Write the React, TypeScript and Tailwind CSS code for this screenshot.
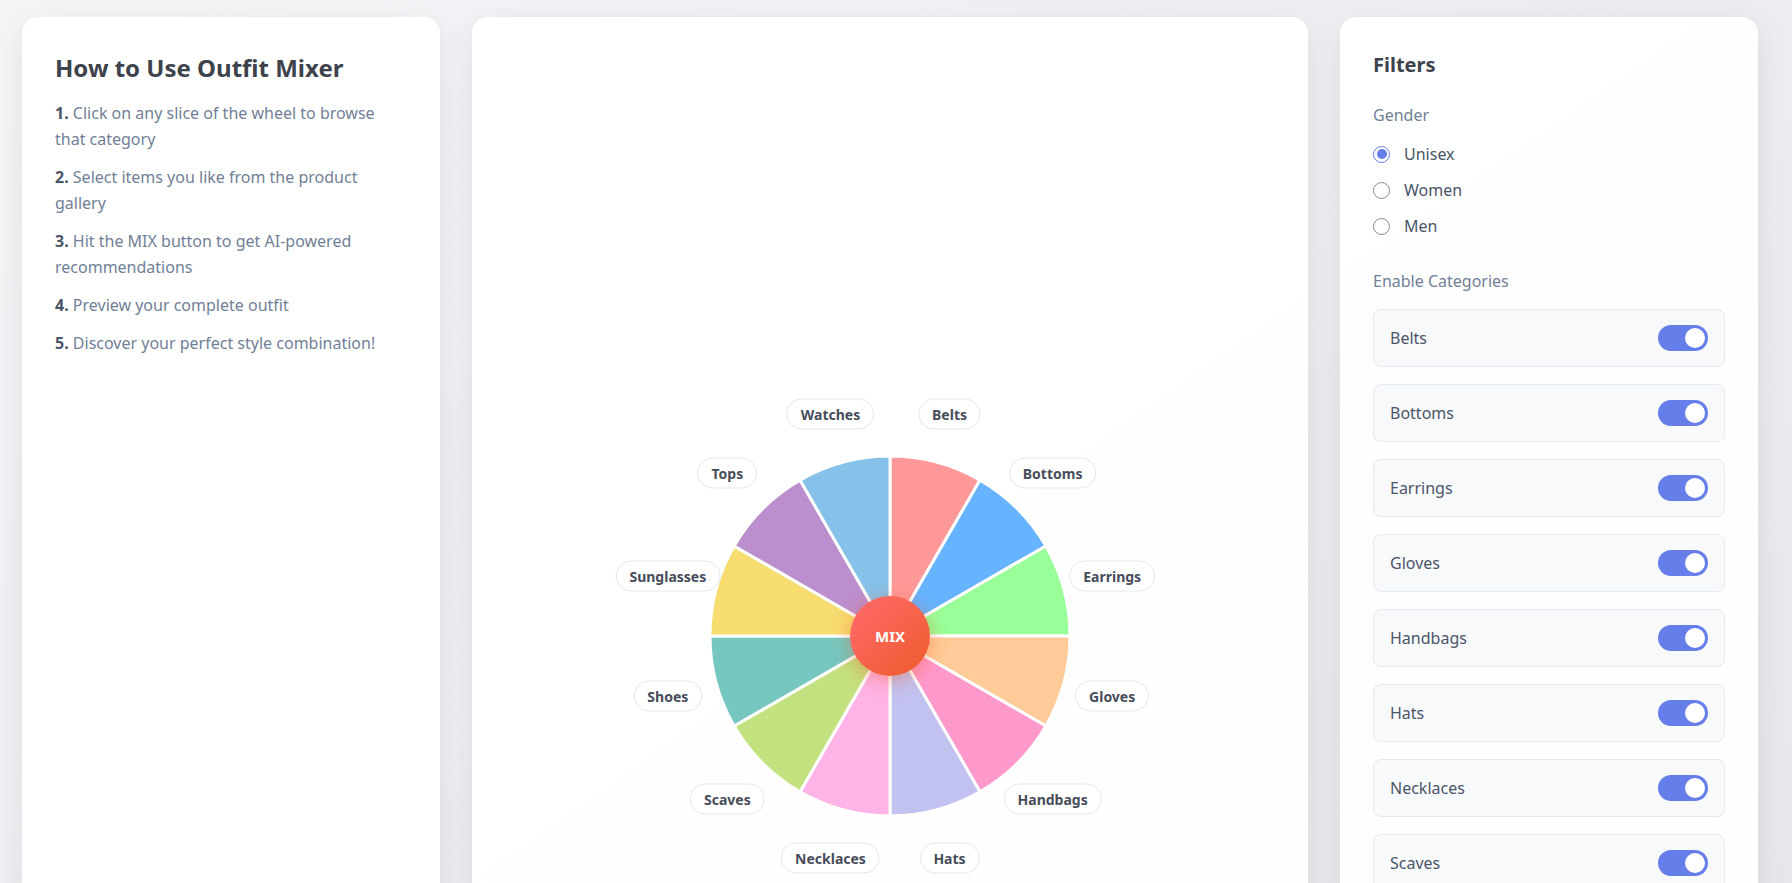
import { useState } from 'react';

const CATEGORIES = [
  { name: 'Belts', color: '#ff9999' },
  { name: 'Bottoms', color: '#66b3ff' },
  { name: 'Earrings', color: '#99ff99' },
  { name: 'Gloves', color: '#ffcc99' },
  { name: 'Handbags', color: '#ff99cc' },
  { name: 'Hats', color: '#c2c2f0' },
  { name: 'Necklaces', color: '#ffb3e6' },
  { name: 'Scaves', color: '#c4e17f' },
  { name: 'Shoes', color: '#76c7c0' },
  { name: 'Sunglasses', color: '#f7dc6f' },
  { name: 'Tops', color: '#bb8fce' },
  { name: 'Watches', color: '#85c1e9' },
];

const STEPS = [
  'Click on any slice of the wheel to browse that category',
  'Select items you like from the product gallery',
  'Hit the MIX button to get AI-powered recommendations',
  'Preview your complete outfit',
  'Discover your perfect style combination!',
];

const BOX_W = 560;
const BOX_H = 520;
const R = 180;
const LABEL_R = 230;

function polar(r: number, deg: number) {
  const rad = (deg * Math.PI) / 180;
  return { x: r * Math.sin(rad), y: -r * Math.cos(rad) };
}

function Wheel() {
  const step = 360 / CATEGORIES.length;
  const size = R * 2 + 4;
  const c = size / 2;

  return (
    <div className="relative mx-auto flex items-center justify-center" style={{ width: BOX_W, height: BOX_H }}>
      <svg width={size} height={size} viewBox={`0 0 ${size} ${size}`}>
        {CATEGORIES.map((cat, i) => {
          const a = polar(R, i * step);
          const b = polar(R, (i + 1) * step);
          const d = `M ${c} ${c} L ${c + a.x} ${c + a.y} A ${R} ${R} 0 0 1 ${c + b.x} ${c + b.y} Z`;
          return <path key={cat.name} d={d} fill={cat.color} stroke="#ffffff" strokeWidth={3} className="cursor-pointer" />;
        })}
      </svg>

      <button className="absolute left-1/2 top-1/2 flex h-20 w-20 -translate-x-1/2 -translate-y-1/2 items-center justify-center rounded-full bg-gradient-to-br from-[#ff6b6b] to-[#ee5a24] text-[15px] font-bold text-white shadow-[0_4px_20px_rgba(238,90,36,0.45)]">
        MIX
      </button>

      {CATEGORIES.map((cat, i) => {
        const p = polar(LABEL_R, i * step + step / 2);
        return (
          <span
            key={cat.name}
            className="absolute -translate-x-1/2 -translate-y-1/2 whitespace-nowrap rounded-full border border-[#e5e7eb] bg-white px-[13px] py-[4px] text-[14px] font-bold leading-[21px] text-[#474d5a]"
            style={{ left: BOX_W / 2 + p.x, top: BOX_H / 2 + p.y }}
          >
            {cat.name}
          </span>
        );
      })}
    </div>
  );
}

function Toggle({ on, onClick }: { on: boolean; onClick: () => void }) {
  return (
    <button
      onClick={onClick}
      className={`relative h-[26px] w-[50px] rounded-full ${on ? 'bg-[#667eea]' : 'bg-[#cbd5e0]'}`}
    >
      <span
        className={`absolute top-[3px] h-5 w-5 rounded-full bg-white ${on ? 'left-[27px]' : 'left-[3px]'}`}
      />
    </button>
  );
}

export default function App() {
  const [gender, setGender] = useState('Unisex');
  const [enabled, setEnabled] = useState<Record<string, boolean>>(
    Object.fromEntries(CATEGORIES.map((c) => [c.name, true]))
  );

  return (
    <div className="min-h-screen bg-gradient-to-br from-[#f4f5f7] to-[#e3e5e9] pl-[22px] pr-[34px] pt-[17px] pb-8 font-['Noto_Sans',sans-serif]">
      <div className="grid grid-cols-[1fr_2fr_1fr] gap-8">
        {/* how to */}
        <div className="rounded-2xl border border-white/20 bg-white/95 p-8 shadow-[0_8px_32px_rgba(0,0,0,0.08)]">
          <h2 className="text-[24px] font-bold leading-[36px] text-[#3d424b]">How to Use Outfit Mixer</h2>
          <div className="mt-[14px] flex flex-col gap-3">
            {STEPS.map((s, i) => (
              <p key={i} className="text-[16px] leading-[26px] text-[#718096]">
                <strong className="text-[#4a5568]">{i + 1}.</strong> {s}
              </p>
            ))}
          </div>
        </div>

        {/* wheel */}
        <div className="rounded-2xl border border-white/20 bg-white/95 p-8 shadow-[0_8px_32px_rgba(0,0,0,0.08)]">
          <div className="mt-[326px]">
            <Wheel />
          </div>
        </div>

        {/* filters */}
        <div className="rounded-2xl border border-white/20 bg-white/95 p-8 shadow-[0_8px_32px_rgba(0,0,0,0.08)]">
          <h3 className="text-[20px] font-bold leading-[30px] text-[#3d424b]">Filters</h3>

          <p className="mt-[23px] text-[16px] leading-6 text-[#718096]">Gender</p>
          <div className="mt-[15px] flex flex-col gap-3">
            {['Unisex', 'Women', 'Men'].map((g) => (
              <label key={g} className="flex h-6 cursor-pointer items-center gap-[14px]" onClick={() => setGender(g)}>
                {gender === g ? (
                  <span className="flex h-[17px] w-[17px] items-center justify-center rounded-full border-[1.5px] border-[#667eea] bg-white">
                    <span className="h-[10px] w-[10px] rounded-full bg-[#667eea]" />
                  </span>
                ) : (
                  <span className="h-[17px] w-[17px] rounded-full border-[1.5px] border-[#8a8a8a] bg-white" />
                )}
                <span className="text-[16px] text-[#4a5568]">{g}</span>
              </label>
            ))}
          </div>

          <p className="mt-[31px] text-[16px] leading-6 text-[#718096]">Enable Categories</p>
          <div className="mt-4 flex flex-col gap-[17px]">
            {CATEGORIES.map((c) => (
              <div
                key={c.name}
                className="flex items-center justify-between rounded-lg border border-[#e5e9f0] bg-[#f8f9fb] px-4 py-[15px]"
              >
                <span className="text-[16px] text-[#4a5568]">{c.name}</span>
                <Toggle
                  on={enabled[c.name]}
                  onClick={() => setEnabled({ ...enabled, [c.name]: !enabled[c.name] })}
                />
              </div>
            ))}
          </div>
        </div>
      </div>
    </div>
  );
}
